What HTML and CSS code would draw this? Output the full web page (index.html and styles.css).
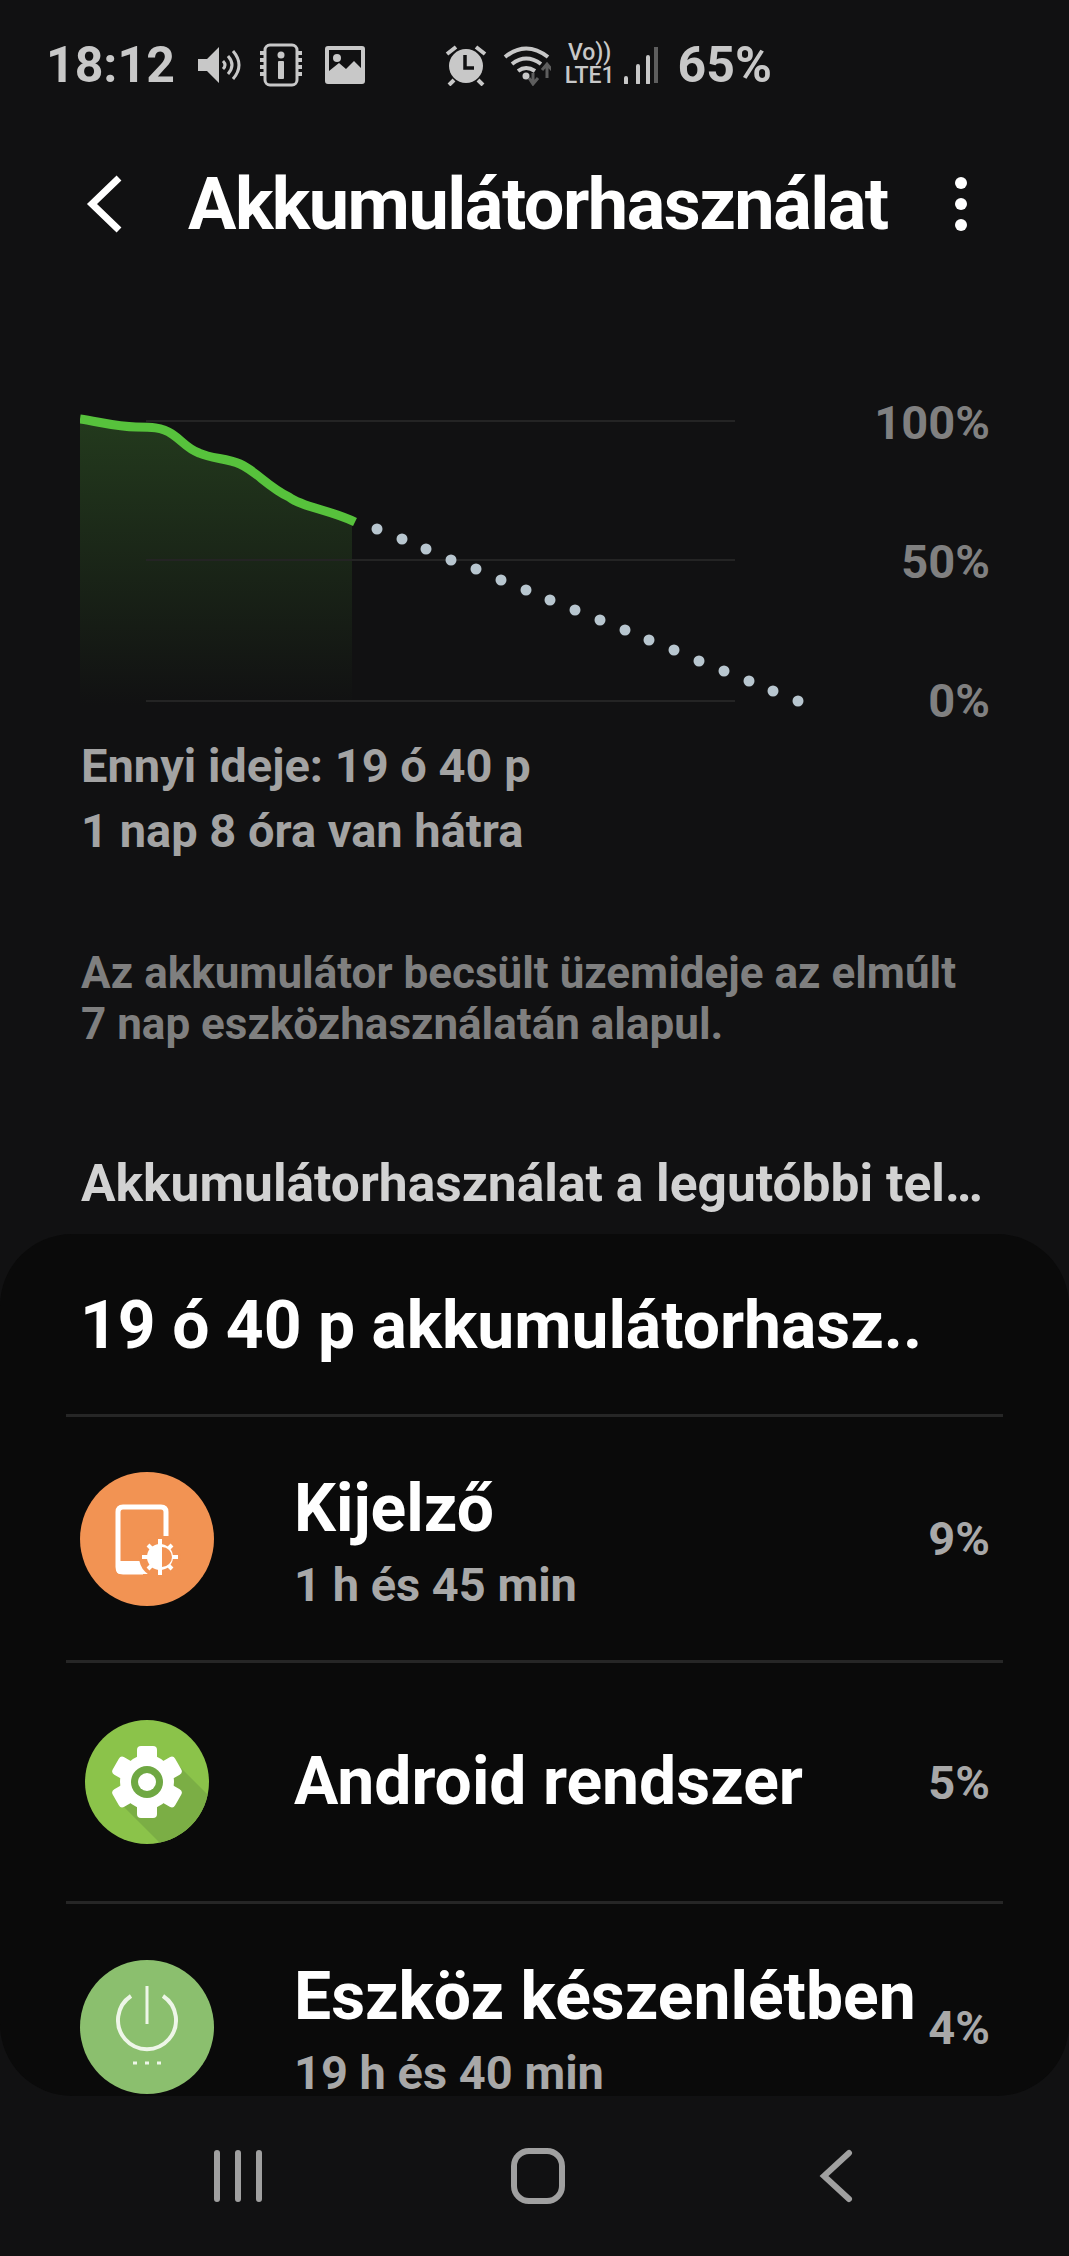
FILE: index.html
```html
<!DOCTYPE html>
<html lang="hu">
<head>
    <meta charset="UTF-8">
    <meta name="viewport" content="width=device-width, initial-scale=1.0">
    <title>Akkumulátorhasználat</title>
    <link rel="stylesheet" href="styles.css">
</head>
<body>

    <!-- Status bar -->
    <div class="status-bar">
        <span class="status-time">18:12</span>
        <svg class="icon-sound" width="44" height="38" viewBox="0 0 44 38">
            <path d="M0 13h9L21 1v36L9 25H0z" fill="#c8c8c8"/>
            <path d="M25 15q4 4 0 8M30 10q8 9 0 18M35 5q12 14 0 28" fill="none" stroke="#c8c8c8" stroke-width="3"/>
        </svg>
        <svg class="icon-chip" width="44" height="44" viewBox="0 0 44 44">
            <rect x="6" y="2" width="32" height="40" rx="5" fill="none" stroke="#c8c8c8" stroke-width="3"/>
            <path d="M1 10h4M1 17h4M1 24h4M1 31h4M39 10h4M39 17h4M39 24h4M39 31h4" stroke="#c8c8c8" stroke-width="4"/>
            <circle cx="22" cy="12" r="3.5" fill="#c8c8c8"/>
            <rect x="19" y="18" width="6" height="18" rx="1" fill="#c8c8c8"/>
        </svg>
        <svg class="icon-image" width="40" height="38" viewBox="0 0 40 38">
            <path fill-rule="evenodd" d="M3 0h34q3 0 3 3v32q0 3-3 3H3q-3 0-3-3V3q0-3 3-3zM4 4v21l10-8 7 6 8-8 7 7V4z" fill="#c8c8c8"/>
            <circle cx="12" cy="12" r="4" fill="#c8c8c8"/>
        </svg>
        <svg class="icon-alarm" width="44" height="42" viewBox="0 0 44 42">
            <circle cx="22" cy="22" r="17" fill="#c8c8c8"/>
            <path d="M21 11v13h9" fill="none" stroke="#111112" stroke-width="3.5"/>
            <path d="M3 10l9-7M41 10l-9-7M10 36l-5 5M34 36l5 5" stroke="#c8c8c8" stroke-width="4"/>
        </svg>
        <svg class="icon-wifi" width="48" height="42" viewBox="0 0 48 42">
            <path d="M2 13q21-17 43 0M9 20q14-11 29 0M15 27q8-6 17 0" fill="none" stroke="#c8c8c8" stroke-width="4"/>
            <circle cx="23" cy="32" r="3.5" fill="#c8c8c8"/>
            <path d="M30 29v9M26 34l4 6 5-6" fill="none" stroke="#5e5e5e" stroke-width="3"/>
            <path d="M44 34v-13M39 26l5-6 5 6" fill="none" stroke="#5e5e5e" stroke-width="3"/>
        </svg>
        <div class="status-volte">
            <span>Vo))</span>
            <span>LTE1</span>
        </div>
        <svg class="icon-signal" width="36" height="38" viewBox="0 0 36 38">
            <path d="M3 32v5M15 20v17M25 11v26" stroke="#c8c8c8" stroke-width="4" stroke-linecap="round"/>
            <path d="M33 1v36" stroke="#5e5e5e" stroke-width="4"/>
        </svg>
        <span class="status-battery">65%</span>
    </div>

    <!-- App bar -->
    <div class="app-bar">
        <svg class="back-arrow" width="36" height="58" viewBox="0 0 36 58">
            <path d="M33 3L6 29l27 26" fill="none" stroke="#fff" stroke-width="7"/>
        </svg>
        <h1 class="app-title">Akkumulátorhasználat</h1>
        <div class="more-menu">
            <span></span>
            <span></span>
            <span></span>
        </div>
    </div>

    <!-- Battery chart -->
    <div class="chart">
        <svg class="chart-plot" width="730" height="310" viewBox="80 405 730 310">
            <defs>
                <linearGradient id="usedFill" x1="0" y1="0" x2="0" y2="1">
                    <stop offset="0" stop-color="#233a1d"/>
                    <stop offset="1" stop-color="#111112"/>
                </linearGradient>
            </defs>
            <path d="M80 419C100 422 118 427 136 427C150 427 162 427 172 434C184 442 186 448 199 453C212 459 226 458 240 464C256 471 268 487 289 497C302 507 330 510 352 521V705H80Z" fill="url(#usedFill)"/>
            <path d="M146 421H735M146 560H735M146 701H735" stroke="#242424" stroke-width="2"/>
            <g fill="#b8c6cf">
                <circle cx="377" cy="529" r="5.5"/>
                <circle cx="402" cy="539" r="5.5"/>
                <circle cx="426" cy="549" r="5.5"/>
                <circle cx="451" cy="560" r="5.5"/>
                <circle cx="476" cy="569" r="5.5"/>
                <circle cx="501" cy="580" r="5.5"/>
                <circle cx="526" cy="590" r="5.5"/>
                <circle cx="550" cy="600" r="5.5"/>
                <circle cx="575" cy="610" r="5.5"/>
                <circle cx="600" cy="620" r="5.5"/>
                <circle cx="625" cy="630" r="5.5"/>
                <circle cx="649" cy="640" r="5.5"/>
                <circle cx="674" cy="650" r="5.5"/>
                <circle cx="699" cy="661" r="5.5"/>
                <circle cx="724" cy="671" r="5.5"/>
                <circle cx="749" cy="681" r="5.5"/>
                <circle cx="773" cy="691" r="5.5"/>
                <circle cx="798" cy="701" r="5.5"/>
            </g>
            <path d="M80 419C100 422 118 427 136 427C150 427 162 427 172 434C184 442 186 448 199 453C212 459 226 458 240 464C256 471 268 487 289 497C302 507 330 510 355 522" fill="none" stroke="#57c23c" stroke-width="9"/>
        </svg>
        <div class="chart-axis">
            <span>100%</span>
            <span>50%</span>
            <span>0%</span>
        </div>
    </div>

    <div class="time-info">
        <p>Ennyi ideje: 19 ó 40 p</p>
        <p>1 nap 8 óra van hátra</p>
    </div>

    <p class="estimate-note">Az akkumulátor becsült üzemideje az elmúlt<br>7 nap eszközhasználatán alapul.</p>

    <p class="section-title">Akkumulátorhasználat a legutóbbi tel…</p>

    <!-- Usage list -->
    <div class="usage-sheet">
        <h2 class="usage-heading">19 ó 40 p akkumulátorhasz..</h2>

        <div class="usage-row">
            <svg class="usage-icon" width="134" height="134" viewBox="-67 -67 134 134">
                <circle r="67" fill="#f29353"/>
                <path d="M19-3V-27q0-5-5-5H-24q-5 0-5 5V28q0 5 5 5H-4" fill="none" stroke="#fff" stroke-width="5"/>
                <path d="M-31 22H-6q5 0 7 13H-26q-5 0-5-5z" fill="#fff"/>
                <circle cx="13" cy="18" r="21" fill="#f29353"/>
                <path d="M13 0V36M-5 18H31M1 6L25 30M25 6L1 30" stroke="#fff" stroke-width="4"/>
                <circle cx="13" cy="18" r="13" fill="#fff"/>
                <path d="M15 8a10 10 0 0 1 0 20z" fill="#f29353"/>
            </svg>
            <div class="usage-text">
                <div class="usage-name">Kijelző</div>
                <div class="usage-time">1 h és 45 min</div>
            </div>
            <span class="usage-percent">9%</span>
        </div>

        <div class="usage-row usage-row-single">
            <svg class="usage-icon" width="134" height="134" viewBox="-67 -67 134 134">
                <defs>
                    <clipPath id="gearDisc">
                        <circle r="62"/>
                    </clipPath>
                </defs>
                <circle r="62" fill="#8bc34a"/>
                <polygon points="-24,24 24,-24 70,22 70,70 22,70" fill="#7bae45" clip-path="url(#gearDisc)"/>
                <g fill="#fff">
                    <circle r="27"/>
                    <rect x="-10" y="-36" width="20" height="72" rx="4"/>
                    <rect x="-10" y="-36" width="20" height="72" rx="4" transform="rotate(60)"/>
                    <rect x="-10" y="-36" width="20" height="72" rx="4" transform="rotate(120)"/>
                </g>
                <circle r="16" fill="#6fa843"/>
                <circle r="9" fill="#fff"/>
            </svg>
            <div class="usage-text">
                <div class="usage-name">Android rendszer</div>
            </div>
            <span class="usage-percent">5%</span>
        </div>

        <div class="usage-row">
            <svg class="usage-icon" width="134" height="134" viewBox="-67 -67 134 134">
                <circle r="67" fill="#8bbf6e"/>
                <path d="M-16-31A29 29 0 1 0 16-31" fill="none" stroke="#eef6e8" stroke-width="4"/>
                <path d="M0-41V-3" stroke="#eef6e8" stroke-width="3"/>
                <path d="M-14 36h4M-2 36h4M10 36h4" stroke="#eef6e8" stroke-width="3"/>
            </svg>
            <div class="usage-text">
                <div class="usage-name">Eszköz készenlétben</div>
                <div class="usage-time">19 h és 40 min</div>
            </div>
            <span class="usage-percent">4%</span>
        </div>
    </div>

    <!-- Navigation bar -->
    <div class="nav-bar">
        <svg width="50" height="54" viewBox="0 0 50 54">
            <path d="M4 4V50M25 4V50M46 4V50" stroke="#a0a0a0" stroke-width="6" stroke-linecap="round"/>
        </svg>
        <svg class="nav-home" width="54" height="56" viewBox="0 0 54 56">
            <rect x="3" y="3" width="48" height="50" rx="15" fill="none" stroke="#a0a0a0" stroke-width="6"/>
        </svg>
        <svg width="34" height="54" viewBox="0 0 34 54">
            <path d="M30 4L5 27l25 23" fill="none" stroke="#a0a0a0" stroke-width="6" stroke-linecap="round"/>
        </svg>
    </div>

</body>
</html>
```

FILE: styles.css
```css
* {
    box-sizing: border-box;
}

body {
    margin: 0;
    width: 1069px;
    height: 2256px;
    overflow: hidden;
    background-color: #111112;
    font-family: Roboto, "Liberation Sans", sans-serif;
    font-weight: 700;
}

p,
h1,
h2 {
    margin: 0;
}

/* Status bar */
.status-bar {
    display: flex;
    align-items: center;
    height: 130px;
    padding-left: 46px;
    color: #c8c8c8;
}

.status-time,
.status-battery {
    font-size: 50px;
}

.icon-sound {
    margin-left: 23px;
}

.icon-chip {
    margin-left: 17px;
}

.icon-image {
    margin-left: 22px;
}

.icon-alarm {
    margin-left: 79px;
}

.icon-wifi {
    margin-left: 15px;
}

.status-volte {
    display: flex;
    flex-direction: column;
    align-items: center;
    margin-top: -3px;
    margin-left: 14px;
    font-size: 23px;
    font-weight: 500;
    line-height: 23px;
}

.icon-signal {
    margin-left: 8px;
}

.status-battery {
    margin-left: 19px;
}

/* App bar */
.app-bar {
    display: flex;
    align-items: center;
    height: 148px;
    padding-left: 86px;
}

.app-title {
    margin-left: 66px;
    font-size: 72px;
    letter-spacing: -1.5px;
    color: #fff;
    white-space: nowrap;
}

.more-menu {
    display: flex;
    flex-direction: column;
    gap: 9px;
    margin-left: 67px;
}

.more-menu span {
    width: 12px;
    height: 12px;
    border-radius: 50%;
    background-color: #fff;
}

/* Battery chart */
.chart {
    display: flex;
    margin-top: 127px;
    padding-left: 80px;
}

.chart-axis {
    display: flex;
    flex-direction: column;
    justify-content: space-between;
    align-items: flex-end;
    width: 180px;
    height: 333px;
    margin-top: -10px;
    font-size: 47px;
    color: #808080;
}

.time-info {
    margin-top: 5px;
    padding-left: 81px;
    font-size: 47px;
    line-height: 65px;
    color: #a3a3a3;
}

.estimate-note {
    margin-top: 85px;
    padding-left: 81px;
    font-size: 44px;
    line-height: 51px;
    color: #7f7f7f;
}

.section-title {
    margin-top: 103px;
    padding-left: 81px;
    font-size: 51.5px;
    color: #d2d2d2;
    white-space: nowrap;
}

/* Usage list */
.usage-sheet {
    height: 862px;
    margin-top: 20px;
    padding: 56px 66px 0;
    border-radius: 72px;
    background-color: #0a0a0a;
}

.usage-heading {
    height: 127px;
    padding-left: 14px;
    border-bottom: 3px solid #262626;
    font-size: 66px;
    line-height: 72px;
    color: #fff;
    white-space: nowrap;
}

.usage-row {
    display: flex;
    align-items: center;
    height: 246px;
    padding: 0 13px 0 14px;
    border-bottom: 3px solid #262626;
}

.usage-row-single {
    height: 241px;
}

.usage-row:last-child {
    border-bottom: none;
}

.usage-icon {
    flex: none;
}

.usage-text {
    flex: 1;
    margin-left: 80px;
}

.usage-name {
    font-size: 66px;
    line-height: 78px;
    color: #fff;
    white-space: nowrap;
}

.usage-time {
    margin-top: 14px;
    font-size: 47px;
    line-height: 46px;
    color: #a8a8a8;
}

.usage-percent {
    font-size: 47px;
    color: #a8a8a8;
}

/* Navigation bar */
.nav-bar {
    display: flex;
    justify-content: space-between;
    align-items: center;
    margin-top: 52px;
    padding: 0 216px 0 213px;
}

.nav-home {
    margin-right: 6px;
}
```
